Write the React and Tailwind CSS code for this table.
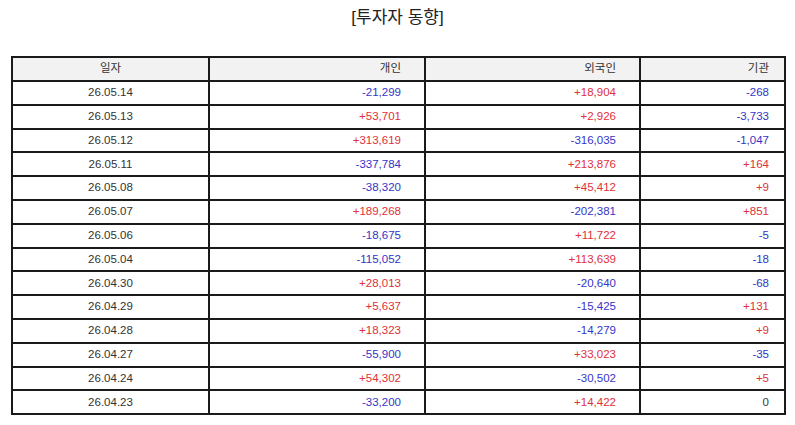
const rows = [
  ["26.05.14", "-21,299", "+18,904", "-268"],
  ["26.05.13", "+53,701", "+2,926", "-3,733"],
  ["26.05.12", "+313,619", "-316,035", "-1,047"],
  ["26.05.11", "-337,784", "+213,876", "+164"],
  ["26.05.08", "-38,320", "+45,412", "+9"],
  ["26.05.07", "+189,268", "-202,381", "+851"],
  ["26.05.06", "-18,675", "+11,722", "-5"],
  ["26.05.04", "-115,052", "+113,639", "-18"],
  ["26.04.30", "+28,013", "-20,640", "-68"],
  ["26.04.29", "+5,637", "-15,425", "+131"],
  ["26.04.28", "+18,323", "-14,279", "+9"],
  ["26.04.27", "-55,900", "+33,023", "-35"],
  ["26.04.24", "+54,302", "-30,502", "+5"],
  ["26.04.23", "-33,200", "+14,422", "0"],
];

const tone = (v) => {
  if (v.startsWith("+")) return "text-[#e0303a]";
  if (v.startsWith("-")) return "text-[#3434c8]";
  return "text-[#333]";
};

export default function App() {
  return (
    <div className="w-[795px] h-[425px] bg-white font-['Liberation_Sans','Noto_Sans_CJK_KR',sans-serif] text-[#333]">
      <h1 className="pt-[7px] h-[56px] text-center text-[17px] leading-[22px] text-[#222]">
        [투자자 동향]
      </h1>
      <table className="ml-[11px] w-[773px] border-collapse table-fixed text-[11.5px]">
        <colgroup>
          <col className="w-[197px]" />
          <col className="w-[216px]" />
          <col className="w-[215px]" />
          <col className="w-[145px]" />
        </colgroup>
        <thead>
          <tr className="h-[24px] bg-[#f2f2f2]">
            <th className="border-2 border-[#1a1a1a] font-normal text-center">일자</th>
            <th className="border-2 border-[#1a1a1a] font-normal text-right pr-[23px]">개인</th>
            <th className="border-2 border-[#1a1a1a] font-normal text-right pr-[23px]">외국인</th>
            <th className="border-2 border-[#1a1a1a] font-normal text-right pr-[15px]">기관</th>
          </tr>
        </thead>
        <tbody>
          {rows.map((r) => (
            <tr key={r[0]} className="h-[23.8px]">
              <td className="border-2 border-[#1a1a1a] text-center">{r[0]}</td>
              <td className={`border-2 border-[#1a1a1a] text-right pr-[23px] ${tone(r[1])}`}>{r[1]}</td>
              <td className={`border-2 border-[#1a1a1a] text-right pr-[23px] ${tone(r[2])}`}>{r[2]}</td>
              <td className={`border-2 border-[#1a1a1a] text-right pr-[15px] ${tone(r[3])}`}>{r[3]}</td>
            </tr>
          ))}
        </tbody>
      </table>
    </div>
  );
}
